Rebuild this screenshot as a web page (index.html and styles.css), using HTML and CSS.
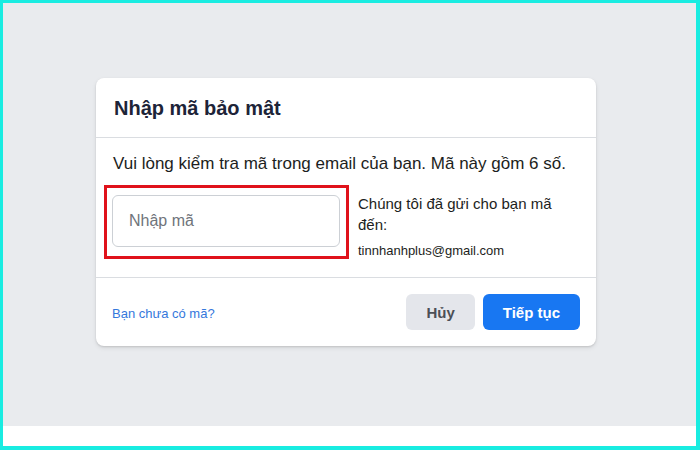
FILE: index.html
```html
<!DOCTYPE html>
<html lang="vi">
<head>
<meta charset="utf-8">
<title>Nhập mã bảo mật</title>
<link rel="stylesheet" href="styles.css">
</head>
<body>
<div class="frame">
  <div class="stage">
    <div class="card">
      <div class="card-header">
        <h2 class="title">Nhập mã bảo mật</h2>
      </div>
      <div class="card-body">
        <p class="intro">Vui lòng kiểm tra mã trong email của bạn. Mã này gồm 6 số.</p>
        <div class="code-row">
          <div class="highlight">
            <div class="code-input"><span class="placeholder">Nhập mã</span></div>
          </div>
          <div class="sent-info">
            <div class="sent-text">Chúng tôi đã gửi cho bạn mã đến:</div>
            <div class="sent-email">tinnhanhplus@gmail.com</div>
          </div>
        </div>
      </div>
      <div class="card-footer">
        <a class="no-code" href="#">Bạn chưa có mã?</a>
        <div class="actions">
          <button class="btn btn-cancel">Hủy</button>
          <button class="btn btn-primary">Tiếp tục</button>
        </div>
      </div>
    </div>
  </div>
  <div class="strip"></div>
</div>
</body>
</html>
```

FILE: styles.css
```css
* { box-sizing: border-box; }
html, body { margin: 0; padding: 0; }
body {
  font-family: "Liberation Sans", Arial, sans-serif;
  color: #1c1e21;
  background: #ffffff;
}
.frame {
  width: 700px;
  height: 450px;
  border-style: solid;
  border-color: #19ece1;
  border-width: 3px 4px 4px 3px;
  display: flex;
  flex-direction: column;
}
.stage {
  height: 423px;
  background: #e9ebee;
  padding: 75px 0 0 93px;
}
.strip {
  flex: 1;
  background: #ffffff;
}
.card {
  width: 500px;
  background: #ffffff;
  border-radius: 8px;
  box-shadow: 0 1px 2px rgba(0,0,0,0.12), 0 2px 5px rgba(0,0,0,0.08);
}
.card-header {
  padding: 18px 18px 17px 18px;
  border-bottom: 1px solid #dadde1;
}
.title {
  margin: 0;
  font-size: 20px;
  line-height: 24px;
  font-weight: bold;
  color: #1d2438;
}
.card-body {
  padding: 16px 16px 18px 16px;
}
.intro {
  margin: 0 0 11px 1px;
  font-size: 17px;
  line-height: 20px;
}
.code-row {
  display: flex;
  align-items: flex-start;
  height: 74px;
  margin-left: -8px;
}
.highlight {
  border: 3px solid #e0121b;
  padding: 7px 6px 9px 5px;
}
.code-input {
  width: 228px;
  height: 52px;
  border: 1px solid #ccd0d5;
  border-radius: 6px;
  padding: 0 16px;
  display: flex;
  align-items: center;
}
.placeholder {
  font-size: 16px;
  color: #6f747b;
}
.sent-info {
  flex: 1;
  margin-left: 9px;
  padding-top: 8px;
}
.sent-text {
  font-size: 15px;
  line-height: 21px;
}
.sent-email {
  margin-top: 9px;
  font-size: 13px;
  line-height: 14px;
}
.card-footer {
  border-top: 1px solid #dadde1;
  padding: 16px;
  display: flex;
  align-items: center;
  justify-content: space-between;
}
.no-code {
  font-size: 13px;
  color: #3578dc;
  text-decoration: none;
  padding-top: 2px;
}
.actions {
  display: flex;
  gap: 8px;
}
.btn {
  height: 36px;
  padding: 0 20px;
  border: none;
  border-radius: 6px;
  font-family: "Liberation Sans", Arial, sans-serif;
  font-size: 15px;
  font-weight: bold;
  cursor: pointer;
}
.btn-cancel {
  background: #e4e6eb;
  color: #4b4f56;
}
.btn-primary {
  background: #1877f2;
  color: #ffffff;
}
```
